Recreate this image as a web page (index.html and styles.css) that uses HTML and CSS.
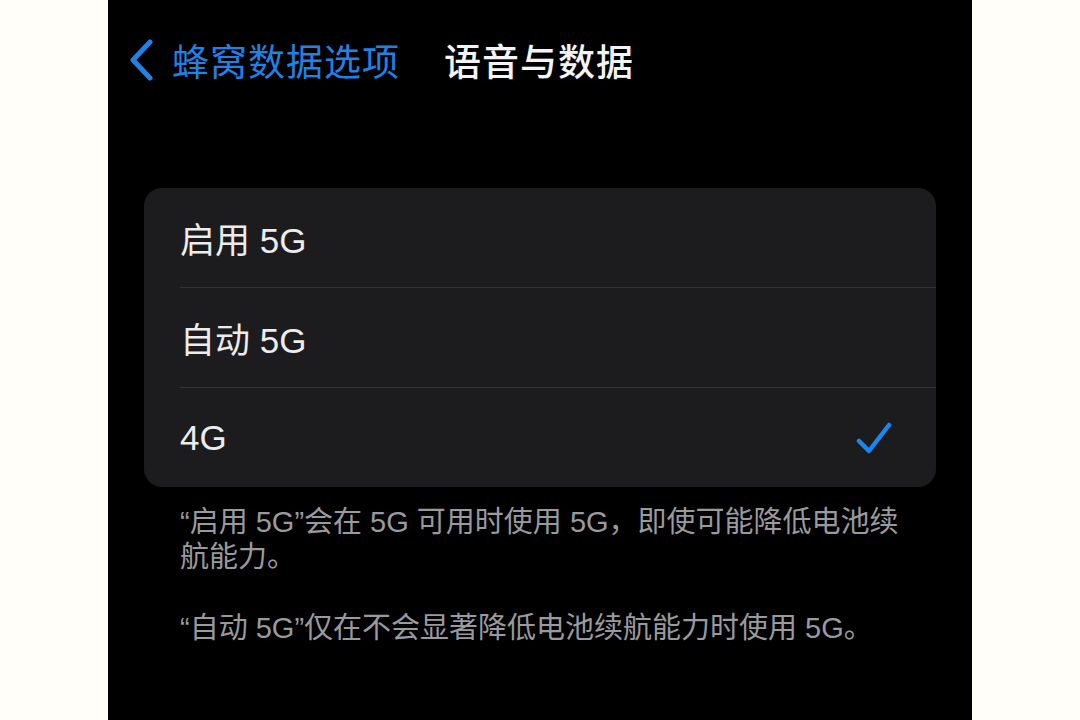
FILE: index.html
```html
<!DOCTYPE html>
<html lang="zh-CN">
<head>
  <meta charset="UTF-8" />
  <title>语音与数据</title>
  <link rel="stylesheet" href="styles.css">
</head>
<body>
  <div class="phone">
    <header class="nav">
      <a class="back" href="#">
        <svg class="chev" width="26" height="42" viewBox="0 0 26 42">
          <path d="M22 3 L5 21 L22 39" fill="none" stroke="#1f82e6" stroke-width="5" stroke-linecap="round" stroke-linejoin="round"/>
        </svg>
        <span>蜂窝数据选项</span>
      </a>
      <h1>语音与数据</h1>
    </header>

    <ul class="list">
      <li>启用 5G</li>
      <li>自动 5G</li>
      <li class="on">4G
        <svg class="check" width="36" height="34" viewBox="0 0 36 34">
          <path d="M3 20 L13 30 L33 4" fill="none" stroke="#1a86f0" stroke-width="4.5" stroke-linecap="round" stroke-linejoin="round"/>
        </svg>
      </li>
    </ul>

    <div class="notes">
      <p>“启用 5G”会在 5G 可用时使用 5G，即使可能降低电池续航能力。</p>
      <p>“自动 5G”仅在不会显著降低电池续航能力时使用 5G。</p>
    </div>
  </div>
</body>
</html>
```

FILE: styles.css
```css
body {
  margin: 0;
  background: #fffef8;
  font-family: "Liberation Sans", "Noto Sans CJK SC", sans-serif;
}
.phone {
  width: 864px;
  height: 720px;
  margin-left: 108px;
  background: #000;
  overflow: hidden;
}
.nav {
  display: flex;
  align-items: center;
  height: 62px;
  padding: 29px 0 0 20px;
}
.back {
  display: flex;
  align-items: center;
  gap: 18px;
  color: #1f82e6;
  text-decoration: none;
  font-size: 37px;
  letter-spacing: 1px;
}
.nav h1 {
  margin: 0 0 0 44px;
  font-size: 37px;
  font-weight: 500;
  color: #f4f4f4;
  letter-spacing: 1px;
}
.list {
  list-style: none;
  margin: 97px 36px 0 36px;
  padding: 0 0 0 36px;
  background: #1c1c1e;
  border-radius: 18px;
}
.list li {
  display: flex;
  align-items: center;
  justify-content: space-between;
  height: 99px;
  padding-right: 44px;
  font-size: 35px;
  color: #ececec;
  border-bottom: 1px solid #333336;
}
.list li:last-child {
  border-bottom: none;
}
.notes {
  margin: 18px 60px 0 72px;
  color: #9a9a9e;
  font-size: 29px;
  line-height: 35px;
}
.notes p {
  margin: 0 0 36px 0;
}
```
